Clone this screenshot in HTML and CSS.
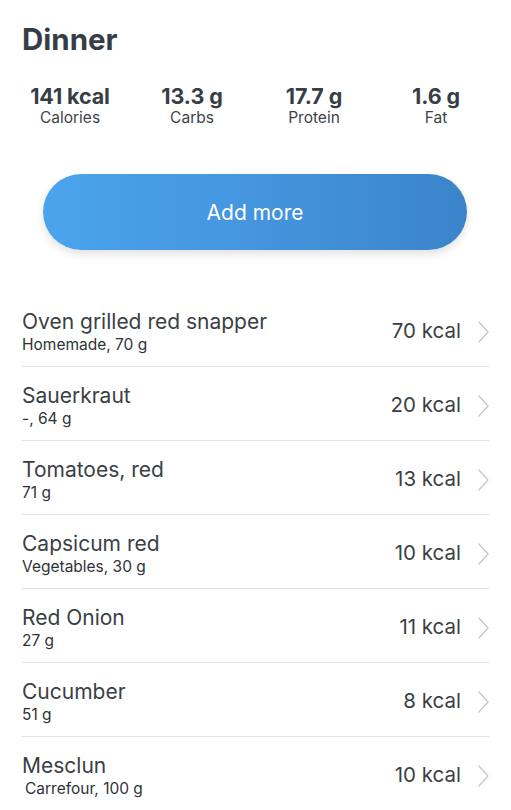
FILE: index.html
```html
<!DOCTYPE html>
<html>
<head>
<meta charset="utf-8">
<link rel="stylesheet" href="styles.css">
</head>
<body>
<div class="page">
  <h1 class="title">Dinner</h1>
  <div class="stats">
    <div class="stat"><div class="val">141 kcal</div><div class="lbl">Calories</div></div>
    <div class="stat"><div class="val">13.3 g</div><div class="lbl">Carbs</div></div>
    <div class="stat"><div class="val">17.7 g</div><div class="lbl">Protein</div></div>
    <div class="stat"><div class="val">1.6 g</div><div class="lbl">Fat</div></div>
  </div>
  <div class="btn-wrap"><button class="btn">Add more</button></div>
  <ul class="list">
    <li class="row"><div class="info"><div class="name">Oven grilled red snapper</div><div class="sub">Homemade, 70 g</div></div><div class="kcal">70 kcal</div><svg class="chev" viewBox="0 0 11 22"><path d="M1 1l9 10-9 10"/></svg></li>
    <li class="row"><div class="info"><div class="name">Sauerkraut</div><div class="sub">-, 64 g</div></div><div class="kcal">20 kcal</div><svg class="chev" viewBox="0 0 11 22"><path d="M1 1l9 10-9 10"/></svg></li>
    <li class="row"><div class="info"><div class="name">Tomatoes, red</div><div class="sub">71 g</div></div><div class="kcal">13 kcal</div><svg class="chev" viewBox="0 0 11 22"><path d="M1 1l9 10-9 10"/></svg></li>
    <li class="row"><div class="info"><div class="name">Capsicum red</div><div class="sub">Vegetables, 30 g</div></div><div class="kcal">10 kcal</div><svg class="chev" viewBox="0 0 11 22"><path d="M1 1l9 10-9 10"/></svg></li>
    <li class="row"><div class="info"><div class="name">Red Onion</div><div class="sub">27 g</div></div><div class="kcal">11 kcal</div><svg class="chev" viewBox="0 0 11 22"><path d="M1 1l9 10-9 10"/></svg></li>
    <li class="row"><div class="info"><div class="name">Cucumber</div><div class="sub">51 g</div></div><div class="kcal">8 kcal</div><svg class="chev" viewBox="0 0 11 22"><path d="M1 1l9 10-9 10"/></svg></li>
    <li class="row"><div class="info"><div class="name">Mesclun</div><div class="sub indent">Carrefour, 100 g</div></div><div class="kcal">10 kcal</div><svg class="chev" viewBox="0 0 11 22"><path d="M1 1l9 10-9 10"/></svg></li>
  </ul>
</div>
</body>
</html>
```
FILE: styles.css
```css
* { box-sizing: border-box; }
html, body { margin: 0; padding: 0; background: #fff; }
body { font-family: Inter, "Noto Sans", sans-serif; color: #3a3f45; width: 511px; height: 810px; overflow: hidden; }
.page { padding: 0 22px; }
.title { margin: 0; padding-top: 22px; font-size: 29.5px; font-weight: 700; color: #353e47; line-height: 34px; }
.stats { display: grid; grid-template-columns: repeat(4, 122px); margin: 28px 0 0 -13px; }
.stat { text-align: center; }
.val { font-size: 21.5px; font-weight: 700; color: #353e47; line-height: 24px; letter-spacing: -0.1px; }
.lbl { font-size: 15.5px; color: #3d434a; line-height: 20px; }
.btn-wrap { padding: 46px 0 0 21px; }
.btn { display: block; width: 424px; height: 76px; border: none; border-radius: 38px; background: linear-gradient(90deg, #4aa4ec 0%, #4495de 50%, #3b84ca 100%); color: #fff; font-family: inherit; font-size: 21px; font-weight: 400; box-shadow: 0 4px 8px rgba(0,0,0,0.12); padding: 0; }
.list { list-style: none; margin: 43px 0 0; padding: 0; }
.row { display: flex; align-items: flex-start; height: 74px; border-bottom: 1px solid #e3e3e6; }
.info { flex: 1; display: flex; flex-direction: column; padding-top: 16px; }
.name { font-size: 21px; line-height: 26px; color: #3a3f45; }
.sub { font-size: 15.5px; line-height: 20px; color: #2f3338; }
.indent { padding-left: 3px; }
.kcal { font-size: 20.5px; line-height: 26px; color: #3a3f45; margin-top: 25px; }
.chev { width: 11px; height: 22px; margin: 28px 0 0 17px; fill: none; stroke: #c8c8cc; stroke-width: 1.3; stroke-linecap: round; stroke-linejoin: round; }
```
